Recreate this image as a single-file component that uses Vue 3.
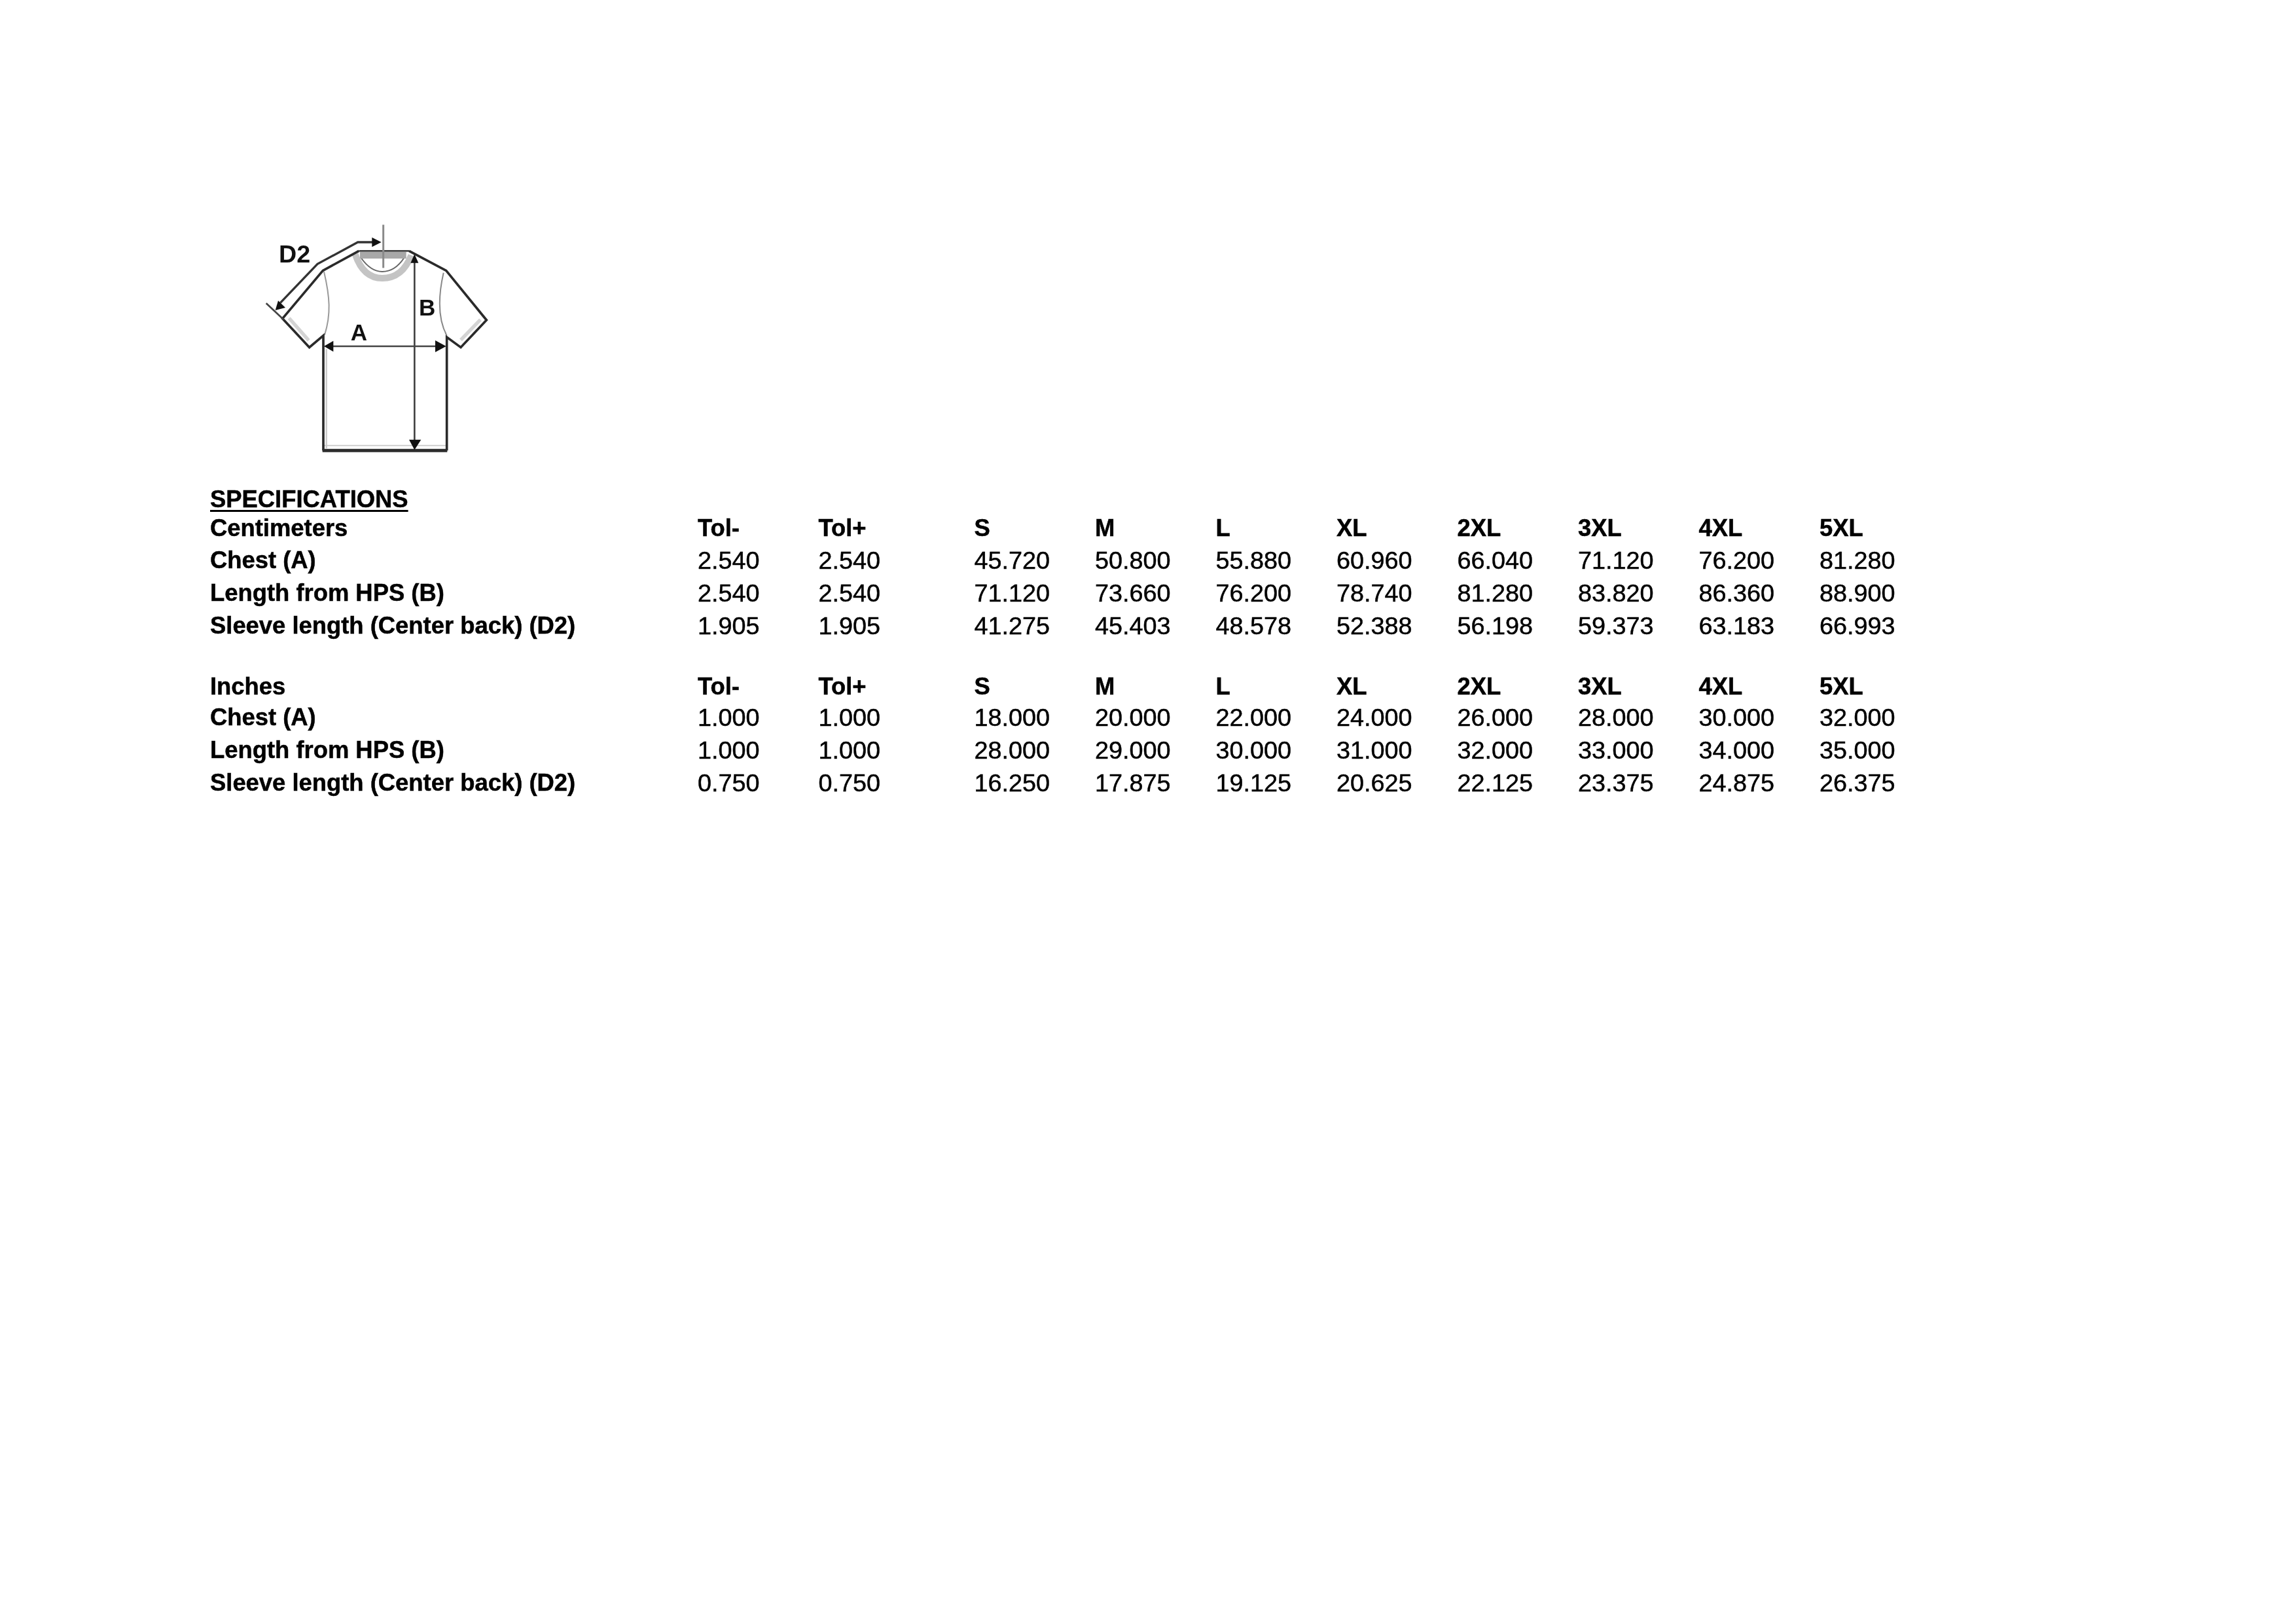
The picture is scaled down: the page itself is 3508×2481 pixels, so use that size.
<script setup>
const sizes = ['S', 'M', 'L', 'XL', '2XL', '3XL', '4XL', '5XL']
const tables = [
  {
    unit: 'Centimeters',
    rows: [
      ['Chest (A)', '2.540', '2.540', '45.720', '50.800', '55.880', '60.960', '66.040', '71.120', '76.200', '81.280'],
      ['Length from HPS (B)', '2.540', '2.540', '71.120', '73.660', '76.200', '78.740', '81.280', '83.820', '86.360', '88.900'],
      ['Sleeve length (Center back) (D2)', '1.905', '1.905', '41.275', '45.403', '48.578', '52.388', '56.198', '59.373', '63.183', '66.993'],
    ],
  },
  {
    unit: 'Inches',
    rows: [
      ['Chest (A)', '1.000', '1.000', '18.000', '20.000', '22.000', '24.000', '26.000', '28.000', '30.000', '32.000'],
      ['Length from HPS (B)', '1.000', '1.000', '28.000', '29.000', '30.000', '31.000', '32.000', '33.000', '34.000', '35.000'],
      ['Sleeve length (Center back) (D2)', '0.750', '0.750', '16.250', '17.875', '19.125', '20.625', '22.125', '23.375', '24.875', '26.375'],
    ],
  },
]
</script>

<template>
  <div class="page">
    <svg class="shirt" viewBox="0 0 1200 1170" width="400" height="390">
      <g fill="none" stroke-linejoin="miter">
        <path d="M488 205 Q525 315 612 315 Q705 315 745 210" stroke="#c4c4c4" stroke-width="30" />
        <path d="M515 222 Q560 285 612 285 Q670 285 712 222" stroke="#666" stroke-width="6" />
        <path d="M510 210 H722" stroke="#a8a8a8" stroke-width="30" />
        <path d="M505 190 H735" stroke="#444" stroke-width="8" />
        <path d="M345 285 C372 400 378 480 348 575" stroke="#999" stroke-width="6" />
        <path d="M893 290 C868 400 866 500 908 578" stroke="#888" stroke-width="6" />
        <path d="M185 498 L275 600" stroke="#d4d4d4" stroke-width="16" />
        <path d="M1062 505 L972 598" stroke="#d4d4d4" stroke-width="16" />
        <path d="M342 1082 H905" stroke="#c8c8c8" stroke-width="5" />
        <path d="M356 640 V1095" stroke="#c8c8c8" stroke-width="7" />
        <path d="M505 190 L340 280 L155 500 L278 632 L342 578 V1105" stroke="#2a2a2a" stroke-width="11" />
        <path d="M735 190 L905 280 L1090 507 L972 632 L908 585 V1105" stroke="#2a2a2a" stroke-width="11" />
        <path d="M338 1105 H910" stroke="#2c2c2c" stroke-width="15" />
        <path d="M617 70 V268" stroke="#8a8a8a" stroke-width="9" />
        <path d="M80 430 L160 505" stroke="#444" stroke-width="8" />
        <path d="M575 150 H500 L315 250 L145 428" stroke="#333" stroke-width="10" />
        <path d="M760 235 V1080" stroke="#444" stroke-width="8" />
        <path d="M380 627 H870" stroke="#444" stroke-width="8" />
      </g>
      <g fill="#111">
        <path d="M608 150 L565 128 V172 Z" />
        <path d="M122 462 L135 418 L168 450 Z" />
        <path d="M760 205 L742 245 H778 Z" />
        <path d="M760 1102 L735 1055 H790 Z" />
        <path d="M345 627 L388 602 V652 Z" />
        <path d="M905 627 L855 600 V654 Z" />
      </g>
      <g class="shirt-label">
        <text x="138" y="243" font-size="113">D2</text>
        <text x="467" y="600" font-size="105">A</text>
        <text x="780" y="487" font-size="105">B</text>
      </g>
    </svg>

    <div class="sheet">
      <div class="title"><span>SPECIFICATIONS</span></div>
      <section v-for="table in tables" :key="table.unit" class="spec">
        <div class="row head">
          <div>{{ table.unit }}</div>
          <div>Tol-</div>
          <div>Tol+</div>
          <div v-for="size in sizes" :key="size">{{ size }}</div>
        </div>
        <div v-for="row in table.rows" :key="row[0]" class="row">
          <div v-for="(cell, i) in row" :key="i" :class="{ name: i === 0 }">{{ cell }}</div>
        </div>
      </section>
    </div>
  </div>
</template>

<style>
html, body { background: #fff; }
</style>

<style scoped>
.page {
  width: 3508px;
  height: 2481px;
  box-sizing: border-box;
  padding: 320px 0 0 321px;
  background: #fff;
  color: #000;
  font-family: "Liberation Sans", Arial, sans-serif;
  overflow: hidden;
}
.shirt {
  display: block;
  margin-left: 59px;
  filter: blur(0.7px);
}
.shirt-label text {
  font-family: "Liberation Sans", Arial, sans-serif;
  font-weight: 700;
  fill: #111;
}
.sheet {
  margin-top: 30px;
  font-size: 37.8px;
  filter: blur(0.7px);
  -webkit-text-stroke: 0.5px #000;
}
.title {
  font-size: 36.4px;
  font-weight: 700;
  line-height: 46px;
  height: 42px;
}
.title span {
  text-decoration: underline;
  text-decoration-thickness: 3px;
  text-underline-offset: 4px;
}
.spec + .spec {
  margin-top: 43px;
}
.row {
  display: grid;
  grid-template-columns: 745px 184.5px 238px repeat(8, 184.5px);
  height: 50px;
  line-height: 50px;
  white-space: nowrap;
}
.head {
  font-size: 36.4px;
  font-weight: 700;
  height: 49px;
}
.spec + .spec .head {
  height: 47px;
}
.name {
  font-size: 36.4px;
  font-weight: 700;
}
</style>
